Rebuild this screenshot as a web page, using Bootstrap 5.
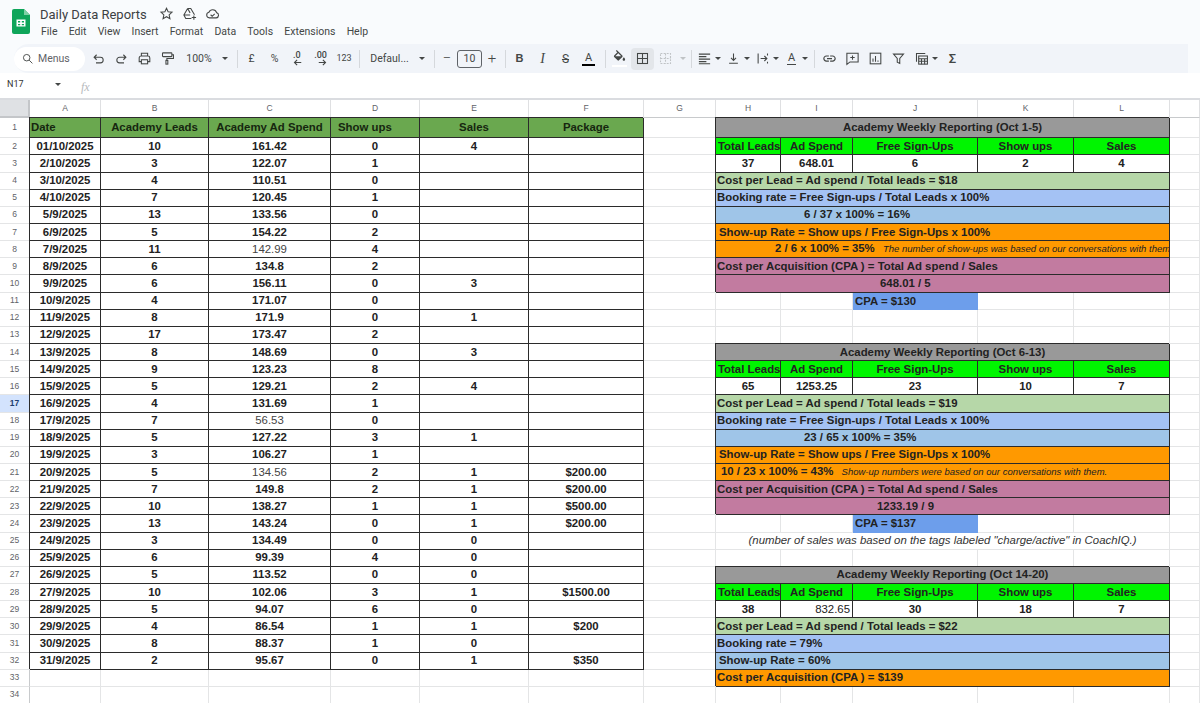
<!DOCTYPE html>
<html lang="en">
<head>
<meta charset="utf-8">
<title>Daily Data Reports</title>
<link href="https://cdn.jsdelivr.net/npm/bootstrap@5.3.0/dist/css/bootstrap.min.css" rel="stylesheet">
<style>
html,body{height:703px;overflow:hidden}
body{background:#f9fbfd;font-family:Roboto,"Liberation Sans",sans-serif;color:#444746}
.ic{width:15px;height:15px;fill:none;stroke:#444746;stroke-width:1.7;flex-shrink:0}
.ic-f{fill:#444746;stroke:none}
.ic-off{stroke:#c0c3c6}
.ic-x{width:9px;height:7px;stroke-width:3}
.topbar{height:43px}
.logo{width:18px;height:25px;margin:9px 10px 0 12px;flex-shrink:0}
.doc-title{font-size:13px;line-height:18px;padding-top:6px;color:#3c4043;width:119px}
.title-ic{gap:8px;padding-top:6px}
.menu-row{gap:11.2px;font-size:10.5px;line-height:14px;margin-top:1px;padding-left:1px}
.tool-strip{height:29px;margin:1px 12px 0 14px;background:#f1f4f9;border-radius:15px 0 0 15px;font-size:10.500px}
.search-pill{width:71px;height:24px;background:#fff;border-radius:12px;padding-left:7px;gap:4px;margin-right:2px;color:#5f6368}
.search-pill .ic{width:13px;height:13px}
.tb{width:23px;height:22px;flex-shrink:0;display:flex;align-items:center;justify-content:center}
.tb-s{width:11px}.tb-t{width:40px}.tb-f{width:53px}.tb-n{width:24px;font-size:9px}
.tb-m{width:20px;font-size:15px;font-weight:300}
.tb-on{background:#e3e6ea;border-radius:4px}
.tb-g{width:19px}
.tb-c{width:19px;margin-left:2px}
.tb-d{width:7px;margin-right:3px}
.sep{width:1px;height:18px;background:#d5d8dc;flex-shrink:0;margin:0 3px}
.sep-w{margin-left:7px;margin-right:2px}
.sep-n{margin-right:2px}
.sep-a{margin-left:5px;margin-right:2px}
.size-box{width:25px;height:18px;border:1px solid #5f6368;border-radius:3px;text-align:center;line-height:16px;flex-shrink:0}
.crt{width:0;height:0;border-left:3.5px solid transparent;border-right:3.5px solid transparent;border-top:3.5px solid #444746}
.crt-off{border-top-color:#c0c3c6}
.b-t{font-weight:700;font-family:"Liberation Sans",sans-serif;font-size:11px}
.i-t{font-style:italic;font-family:"Liberation Serif",serif;font-size:14px}
.s-t{text-decoration:line-through;font-size:12px}
.a-t{font-size:11px;line-height:12px;border-bottom:2px solid #000;padding:0 3px}
.a-g{border-bottom-color:#444746;border-bottom-width:1px;padding:0 1px}
.arrow-t{font-size:9px;font-weight:500;line-height:8px;white-space:nowrap}
.arrow-t .ic{display:block;margin-left:auto}
.sigma{font-size:13px;font-weight:500}
.fill-wrap{border-bottom:2px solid #fff;line-height:0}
.fx-row{height:25px;background:#fff;padding-top:5px;font-size:9px}
.name-box{width:61px;padding-left:7px;color:#333}
.fx{margin-left:20px;font-family:"Liberation Serif",serif;font-style:italic;font-size:12px;color:#b6b9bc}
.sheet{background:#fff;flex-grow:1;overflow:hidden;border-top:2px solid #dadce0}
.grid{table-layout:fixed;width:1200px;border-collapse:separate;border-spacing:0;font-family:"Liberation Sans",Arial,sans-serif;font-size:11.4px;color:#222}
.grid th,.grid td{border-right:1px solid #e4e5e6;border-bottom:1px solid #e4e5e6;height:17.15px;padding:0 2px 1px;line-height:14px;white-space:nowrap;overflow:hidden;text-align:left}
.grid thead th{height:18px;font-size:8.5px;font-weight:400;color:#5f6368;text-align:center;border-bottom:1px solid #c8cacc;border-right:1px solid #dfe0e2}
.grid thead th:first-child{background:#dfe1e4;border-right:2px solid #c4c6c9;border-bottom:2px solid #c4c6c9}
.grid tbody th{font-size:8.5px;font-weight:400;color:#5f6368;text-align:center;background:#fff;border-right:1px solid #c8cacc}
.grid tbody tr.row-one>*{height:20.3px}
.grid tbody th.sel{background:#d3e3fd;font-weight:700;color:#1f3f70}
.grid .dat>td:nth-of-type(-n+6){border-right:1px solid #2b2b2b;border-bottom:1px solid #2b2b2b;box-shadow:-1px -1px 0 #2b2b2b;font-weight:700;text-align:center}
.grid .dat>td.lite{font-weight:400;color:#444}
.grid .row-one>td:nth-of-type(-n+6){background:#6aa84f;color:#16260f}
.grid .dat>td.lt{text-align:left;padding-left:1px}
.grid .dat>td.lt2{text-align:left;padding-left:7px}
.grid td.bx{border-right:1px solid #2b2b2b;border-bottom:1px solid #2b2b2b;box-shadow:-1px -1px 0 #2b2b2b;font-weight:700;color:#222;padding-left:1px}
.grid td.ctr{text-align:center;padding-left:2px}
.c-gray{background:#999}.c-lime{background:#00f500}.c-sage{background:#b6d7a8}
.c-peri{background:#a4c2f4}.c-sky{background:#9fc5e8}.c-org{background:#f90}.c-pink{background:#c27ba0}
.grid td.c-cpa{background:#6d9eeb;font-weight:700;border-right:0;border-bottom:0}
.grid td.rgt{text-align:right;font-weight:400}
.grid td.p3{padding-left:3px}.grid td.p59{padding-left:59px}.grid td.p88{padding-left:88px}.grid td.p164{padding-left:164px}.grid td.p161{padding-left:161px}.grid td.p5{padding-left:5px}
.sm-note{font-size:9.5px;font-style:italic;font-weight:400;margin-left:5px}
.grid td.note-row{text-align:center;font-style:italic;color:#333;font-size:11.4px}
</style>
</head>
<body class="d-flex flex-column">
<header class="topbar d-flex flex-shrink-0">
  <svg class="logo" viewBox="0 0 18 25"><path d="M2 0h10l6 6v17a2 2 0 0 1-2 2H2a2 2 0 0 1-2-2V2a2 2 0 0 1 2-2z" fill="#0fa55a"/><path d="M12 0l6 6h-6z" fill="#7fd0a5"/><path d="M4.500 10.500h9v7h-9z M6 12v1.500h2.200V12z M9.800 12v1.500H12V12z M6 15v1.200h2.200V15z M9.800 15v1.200H12V15z" fill="#fff" fill-rule="evenodd"/></svg>
  <div>
    <div class="d-flex">
      <div class="doc-title">Daily Data Reports</div>
      <div class="title-ic d-flex">
        <svg class="ic" viewBox="0 0 24 24"><polygon points="12 3.5 14.6 9.2 20.8 9.9 16.2 14.1 17.5 20.2 12 17.1 6.5 20.2 7.8 14.1 3.2 9.9 9.4 9.2"/></svg>
        <svg class="ic" viewBox="0 0 24 24"><path d="M9 4h5l6 10M9 4L3 14.500 6 20h9M3 14.500h10M9 4l4 7M19 15v7M15.500 18.500h7"/></svg>
        <svg class="ic" viewBox="0 0 24 24"><path d="M7 19a4.500 4.500 0 0 1-.7-8.900A6.500 6.500 0 0 1 18.500 10.600 4.300 4.300 0 0 1 18 19zM9 14l2.500 2.500 4-4"/></svg>
      </div>
    </div>
    <nav class="menu-row d-flex"><span>File</span><span>Edit</span><span>View</span><span>Insert</span><span>Format</span><span>Data</span><span>Tools</span><span>Extensions</span><span>Help</span></nav>
  </div>
</header>
<div class="tool-strip d-flex align-items-center flex-shrink-0">
  <div class="search-pill d-flex align-items-center flex-shrink-0"><svg class="ic" viewBox="0 0 24 24"><circle cx="10.500" cy="10.500" r="6"/><path d="M15 15l6 6"/></svg><span>Menus</span></div>
  <div class="tb"><svg class="ic" viewBox="0 0 24 24"><path d="M5.500 10H15a4.500 4.500 0 0 1 0 9H8M9 6l-4 4 4 4"/></svg></div>
  <div class="tb"><svg class="ic" viewBox="0 0 24 24"><path d="M18.500 10H9a4.500 4.500 0 0 0 0 9h7M15 6l4 4-4 4"/></svg></div>
  <div class="tb"><svg class="ic" viewBox="0 0 24 24"><path d="M7 8V3.500h10V8M7 17H3.500v-6a3 3 0 0 1 3-3h11a3 3 0 0 1 3 3v6H17"/><rect x="7" y="14" width="10" height="6.500"/></svg></div>
  <div class="tb"><svg class="ic" viewBox="0 0 24 24"><rect x="4" y="3" width="15" height="6" rx="1"/><path d="M19 6h2.500v6H11v3"/><rect x="9.500" y="15" width="3" height="6"/></svg></div>
  <div class="tb tb-t">100%</div><div class="tb tb-s"><i class="crt"></i></div>
  <div class="sep sep-w"></div>
  <div class="tb">£</div><div class="tb">%</div>
  <div class="tb"><span class="arrow-t">.0<svg class="ic ic-x" viewBox="0 0 24 18"><path d="M22 9H4M11 2L4 9l7 7"/></svg></span></div>
  <div class="tb"><span class="arrow-t">.00<svg class="ic ic-x" viewBox="0 0 24 18"><path d="M2 9h18M13 2l7 7-7 7"/></svg></span></div>
  <div class="tb tb-n">123</div>
  <div class="sep"></div>
  <div class="tb tb-f">Defaul...</div><div class="tb tb-s"><i class="crt"></i></div>
  <div class="sep sep-w"></div>
  <div class="tb tb-m">−</div><div class="size-box">10</div><div class="tb tb-m">+</div>
  <div class="sep sep-n"></div>
  <div class="tb b-t">B</div><div class="tb i-t">I</div><div class="tb s-t">S</div><div class="tb"><span class="a-t">A</span></div>
  <div class="sep sep-a"></div>
  <div class="tb"><span class="fill-wrap"><svg class="ic ic-f" viewBox="0 0 24 24"><path d="M16.560 8.940L7.620 0 6.210 1.410l2.380 2.380-5.150 5.150c-.59.59-.59 1.540 0 2.120l5.500 5.500c.29.290.68.440 1.060.440s.77-.15 1.060-.44l5.500-5.500c.59-.58.59-1.530 0-2.120zM5.210 10L10 5.210 14.790 10H5.210zM19 11.500s-2 2.170-2 3.500c0 1.100.9 2 2 2s2-.9 2-2c0-1.330-2-3.500-2-3.500z"/></svg></span></div>
  <div class="tb tb-on"><svg class="ic" viewBox="0 0 24 24"><rect x="4" y="4" width="16" height="16"/><path d="M12 4v16M4 12h16"/></svg></div>
  <div class="tb"><svg class="ic ic-off" viewBox="0 0 24 24" stroke-dasharray="3 2"><rect x="4" y="4" width="16" height="16"/><path d="M12 4v16M4 12h16"/></svg></div>
  <div class="tb tb-s"><i class="crt crt-off"></i></div>
  <div class="sep"></div>
  <div class="tb tb-g"><svg class="ic" viewBox="0 0 24 24"><path d="M3 5h18M3 9h12M3 13h18M3 17h12M3 20.500h18"/></svg></div><div class="tb tb-d"><i class="crt"></i></div>
  <div class="tb tb-g"><svg class="ic" viewBox="0 0 24 24"><path d="M12 4v11M8 11l4 4 4-4M5 19.500h14"/></svg></div><div class="tb tb-d"><i class="crt"></i></div>
  <div class="tb tb-g"><svg class="ic" viewBox="0 0 24 24"><path d="M5 4v16M9 12h9M15 8l4 4-4 4M20 4v3M20 17v3"/></svg></div><div class="tb tb-d"><i class="crt"></i></div>
  <div class="tb tb-g"><span class="a-t a-g">A</span></div><div class="tb tb-d"><i class="crt"></i></div>
  <div class="sep"></div>
  <div class="tb"><svg class="ic ic-f" viewBox="0 0 24 24"><path d="M3.900 12c0-1.710 1.390-3.100 3.100-3.100h4V7H7c-2.760 0-5 2.240-5 5s2.240 5 5 5h4v-1.900H7c-1.710 0-3.100-1.390-3.100-3.100zM8 13h8v-2H8v2zm9-6h-4v1.900h4c1.710 0 3.100 1.390 3.100 3.100s-1.390 3.100-3.100 3.100h-4V17h4c2.760 0 5-2.240 5-5s-2.240-5-5-5z"/></svg></div>
  <div class="tb"><svg class="ic" viewBox="0 0 24 24"><path d="M3 3.500h18v14H8l-5 4zM12 7v7M8.500 10.500h7"/></svg></div>
  <div class="tb"><svg class="ic" viewBox="0 0 24 24"><rect x="3.500" y="3.500" width="17" height="17"/><path d="M8 17v-5M12 17V8M16 17v-2"/></svg></div>
  <div class="tb"><svg class="ic" viewBox="0 0 24 24"><path d="M4 5h16l-6 7v8l-4-2v-6z"/></svg></div>
  <div class="tb tb-c"><svg class="ic" viewBox="0 0 24 24"><path d="M4 17V4h14"/><rect x="7.500" y="8" width="14" height="13"/><path d="M7.500 12.500h14M7.500 16.500h14M12 12.500V21M17 12.500V21"/></svg></div><div class="tb tb-d"><i class="crt"></i></div>
  <div class="tb sigma">Σ</div>
</div>
<div class="fx-row d-flex align-items-start flex-shrink-0">
  <div class="name-box d-flex align-items-center justify-content-between">N17<i class="crt"></i></div>
  <div class="fx">fx</div>
</div>
<main class="sheet">
<table class="grid">
<colgroup><col width="30"><col width="71"><col width="108"><col width="122"><col width="89"><col width="109"><col width="115"><col width="72"><col width="65"><col width="72"><col width="125"><col width="96"><col width="96"><col width="30"></colgroup>
<thead><tr><th></th><th>A</th><th>B</th><th>C</th><th>D</th><th>E</th><th>F</th><th>G</th><th>H</th><th>I</th><th>J</th><th>K</th><th>L</th><th></th></tr></thead>
<tbody>
<tr class="dat row-one"><th>1</th><td class="lt">Date</td><td>Academy Leads</td><td>Academy Ad Spend</td><td class="lt2">Show ups</td><td>Sales</td><td>Package</td><td></td><td colspan="5" class="bx ctr c-gray">Academy Weekly Reporting (Oct 1-5)</td><td></td></tr>
<tr class="dat"><th>2</th><td>01/10/2025</td><td>10</td><td>161.42</td><td>0</td><td>4</td><td></td><td></td><td class="bx ctr c-lime">Total Leads</td><td class="bx ctr c-lime">Ad Spend</td><td class="bx ctr c-lime">Free Sign-Ups</td><td class="bx ctr c-lime">Show ups</td><td class="bx ctr c-lime">Sales</td><td></td></tr>
<tr class="dat"><th>3</th><td>2/10/2025</td><td>3</td><td>122.07</td><td>1</td><td></td><td></td><td></td><td class="bx ctr">37</td><td class="bx ctr">648.01</td><td class="bx ctr">6</td><td class="bx ctr">2</td><td class="bx ctr">4</td><td></td></tr>
<tr class="dat"><th>4</th><td>3/10/2025</td><td>4</td><td>110.51</td><td>0</td><td></td><td></td><td></td><td colspan="5" class="bx c-sage">Cost per Lead = Ad spend / Total leads = $18</td><td></td></tr>
<tr class="dat"><th>5</th><td>4/10/2025</td><td>7</td><td>120.45</td><td>1</td><td></td><td></td><td></td><td colspan="5" class="bx c-peri">Booking rate = Free Sign-ups / Total Leads x 100%</td><td></td></tr>
<tr class="dat"><th>6</th><td>5/9/2025</td><td>13</td><td>133.56</td><td>0</td><td></td><td></td><td></td><td colspan="5" class="bx c-sky p88">6 / 37 x 100% = 16%</td><td></td></tr>
<tr class="dat"><th>7</th><td>6/9/2025</td><td>5</td><td>154.22</td><td>2</td><td></td><td></td><td></td><td colspan="5" class="bx c-org p3">Show-up Rate = Show ups / Free Sign-Ups x 100%</td><td></td></tr>
<tr class="dat"><th>8</th><td>7/9/2025</td><td>11</td><td class="lite">142.99</td><td>4</td><td></td><td></td><td></td><td colspan="5" class="bx c-org p59">2 / 6 x 100% = 35% <span class="sm-note">The number of show-ups was based on our conversations with them</span></td><td></td></tr>
<tr class="dat"><th>9</th><td>8/9/2025</td><td>6</td><td>134.8</td><td>2</td><td></td><td></td><td></td><td colspan="5" class="bx c-pink">Cost per Acquisition (CPA ) = Total Ad spend / Sales</td><td></td></tr>
<tr class="dat"><th>10</th><td>9/9/2025</td><td>6</td><td>156.11</td><td>0</td><td>3</td><td></td><td></td><td colspan="5" class="bx c-pink p164">648.01 / 5</td><td></td></tr>
<tr class="dat"><th>11</th><td>10/9/2025</td><td>4</td><td>171.07</td><td>0</td><td></td><td></td><td></td><td></td><td></td><td class="c-cpa">CPA = $130</td><td></td><td></td><td></td></tr>
<tr class="dat"><th>12</th><td>11/9/2025</td><td>8</td><td>171.9</td><td>0</td><td>1</td><td></td><td></td><td></td><td></td><td></td><td></td><td></td><td></td></tr>
<tr class="dat"><th>13</th><td>12/9/2025</td><td>17</td><td>173.47</td><td>2</td><td></td><td></td><td></td><td></td><td></td><td></td><td></td><td></td><td></td></tr>
<tr class="dat"><th>14</th><td>13/9/2025</td><td>8</td><td>148.69</td><td>0</td><td>3</td><td></td><td></td><td colspan="5" class="bx ctr c-gray">Academy Weekly Reporting (Oct 6-13)</td><td></td></tr>
<tr class="dat"><th>15</th><td>14/9/2025</td><td>9</td><td>123.23</td><td>8</td><td></td><td></td><td></td><td class="bx ctr c-lime">Total Leads</td><td class="bx ctr c-lime">Ad Spend</td><td class="bx ctr c-lime">Free Sign-Ups</td><td class="bx ctr c-lime">Show ups</td><td class="bx ctr c-lime">Sales</td><td></td></tr>
<tr class="dat"><th>16</th><td>15/9/2025</td><td>5</td><td>129.21</td><td>2</td><td>4</td><td></td><td></td><td class="bx ctr">65</td><td class="bx ctr">1253.25</td><td class="bx ctr">23</td><td class="bx ctr">10</td><td class="bx ctr">7</td><td></td></tr>
<tr class="dat"><th class="sel">17</th><td>16/9/2025</td><td>4</td><td>131.69</td><td>1</td><td></td><td></td><td></td><td colspan="5" class="bx c-sage">Cost per Lead = Ad spend / Total leads = $19</td><td></td></tr>
<tr class="dat"><th>18</th><td>17/9/2025</td><td>7</td><td class="lite">56.53</td><td>0</td><td></td><td></td><td></td><td colspan="5" class="bx c-peri">Booking rate = Free Sign-ups / Total Leads x 100%</td><td></td></tr>
<tr class="dat"><th>19</th><td>18/9/2025</td><td>5</td><td>127.22</td><td>3</td><td>1</td><td></td><td></td><td colspan="5" class="bx c-sky p88">23 / 65 x 100% = 35%</td><td></td></tr>
<tr class="dat"><th>20</th><td>19/9/2025</td><td>3</td><td>106.27</td><td>1</td><td></td><td></td><td></td><td colspan="5" class="bx c-org p3">Show-up Rate = Show ups / Free Sign-Ups x 100%</td><td></td></tr>
<tr class="dat"><th>21</th><td>20/9/2025</td><td>5</td><td class="lite">134.56</td><td>2</td><td>1</td><td>$200.00</td><td></td><td colspan="5" class="bx c-org p5">10 / 23 x 100% = 43% <span class="sm-note">Show-up numbers were based on our conversations with them.</span></td><td></td></tr>
<tr class="dat"><th>22</th><td>21/9/2025</td><td>7</td><td>149.8</td><td>2</td><td>1</td><td>$200.00</td><td></td><td colspan="5" class="bx c-pink">Cost per Acquisition (CPA ) = Total Ad spend / Sales</td><td></td></tr>
<tr class="dat"><th>23</th><td>22/9/2025</td><td>10</td><td>138.27</td><td>1</td><td>1</td><td>$500.00</td><td></td><td colspan="5" class="bx c-pink p161">1233.19 / 9</td><td></td></tr>
<tr class="dat"><th>24</th><td>23/9/2025</td><td>13</td><td>143.24</td><td>0</td><td>1</td><td>$200.00</td><td></td><td></td><td></td><td class="c-cpa">CPA = $137</td><td></td><td></td><td></td></tr>
<tr class="dat"><th>25</th><td>24/9/2025</td><td>3</td><td>134.49</td><td>0</td><td>0</td><td></td><td></td><td colspan="5" class="note-row">(number of sales was based on the tags labeled "charge/active" in CoachIQ.)</td><td></td></tr>
<tr class="dat"><th>26</th><td>25/9/2025</td><td>6</td><td>99.39</td><td>4</td><td>0</td><td></td><td></td><td></td><td></td><td></td><td></td><td></td><td></td></tr>
<tr class="dat"><th>27</th><td>26/9/2025</td><td>5</td><td>113.52</td><td>0</td><td>0</td><td></td><td></td><td colspan="5" class="bx ctr c-gray">Academy Weekly Reporting (Oct 14-20)</td><td></td></tr>
<tr class="dat"><th>28</th><td>27/9/2025</td><td>10</td><td>102.06</td><td>3</td><td>1</td><td>$1500.00</td><td></td><td class="bx ctr c-lime">Total Leads</td><td class="bx ctr c-lime">Ad Spend</td><td class="bx ctr c-lime">Free Sign-Ups</td><td class="bx ctr c-lime">Show ups</td><td class="bx ctr c-lime">Sales</td><td></td></tr>
<tr class="dat"><th>29</th><td>28/9/2025</td><td>5</td><td>94.07</td><td>6</td><td>0</td><td></td><td></td><td class="bx ctr">38</td><td class="bx rgt">832.65</td><td class="bx ctr">30</td><td class="bx ctr">18</td><td class="bx ctr">7</td><td></td></tr>
<tr class="dat"><th>30</th><td>29/9/2025</td><td>4</td><td>86.54</td><td>1</td><td>1</td><td>$200</td><td></td><td colspan="5" class="bx c-sage">Cost per Lead = Ad spend / Total leads = $22</td><td></td></tr>
<tr class="dat"><th>31</th><td>30/9/2025</td><td>8</td><td>88.37</td><td>1</td><td>0</td><td></td><td></td><td colspan="5" class="bx c-peri">Booking rate = 79%</td><td></td></tr>
<tr class="dat"><th>32</th><td>31/9/2025</td><td>2</td><td>95.67</td><td>0</td><td>1</td><td>$350</td><td></td><td colspan="5" class="bx c-sky p3">Show-up Rate = 60%</td><td></td></tr>
<tr><th>33</th><td></td><td></td><td></td><td></td><td></td><td></td><td></td><td colspan="5" class="bx c-org">Cost per Acquisition (CPA ) = $139</td><td></td></tr>
<tr><th>34</th><td></td><td></td><td></td><td></td><td></td><td></td><td></td><td></td><td></td><td></td><td></td><td></td><td></td></tr>
</tbody>
</table>
</main>
<script src="https://cdn.jsdelivr.net/npm/bootstrap@5.3.0/dist/js/bootstrap.bundle.min.js"></script>
</body>
</html>
